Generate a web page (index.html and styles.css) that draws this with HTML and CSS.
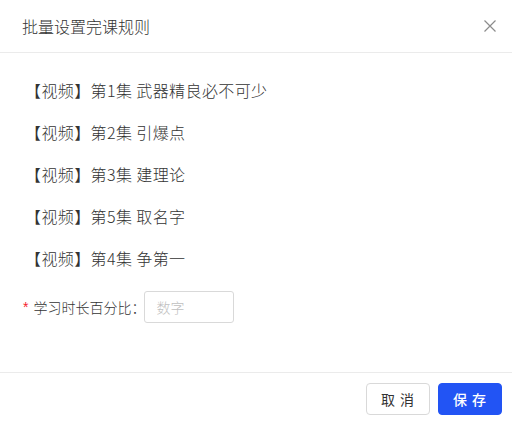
FILE: index.html
```html
<!DOCTYPE html>
<html lang="zh-CN">
<head>
<meta charset="utf-8">
<title>批量设置完课规则</title>
<link rel="stylesheet" href="styles.css">
</head>
<body>
<div class="dialog">
  <div class="header">
    <span class="title">批量设置完课规则</span>
    <span class="close" aria-label="关闭">
      <svg width="12" height="12" viewBox="0 0 12 12"><path d="M0.5 0.5 L11.5 11.5 M11.5 0.5 L0.5 11.5" stroke="#8c8c8c" stroke-width="1.2" fill="none"/></svg>
    </span>
  </div>
  <div class="content">
    <ul class="list">
      <li>【视频】第1集 武器精良必不可少</li>
      <li>【视频】第2集 引爆点</li>
      <li>【视频】第3集 建理论</li>
      <li>【视频】第5集 取名字</li>
      <li>【视频】第4集 争第一</li>
    </ul>
    <div class="form-row">
      <label class="label"><span class="req">*</span>学习时长百分比：</label>
      <input class="input" type="text" placeholder="数字">
    </div>
  </div>
  <div class="footer">
    <button class="btn">取 消</button>
    <button class="btn primary">保 存</button>
  </div>
</div>
</body>
</html>
```
FILE: styles.css
```css
* { box-sizing: border-box; }
html, body { margin: 0; padding: 0; background: #fff; }
body {
  font-family: "Noto Sans CJK SC", "Noto Sans", sans-serif;
  color: #333;
  font-weight: 300;
}
.dialog {
  width: 512px;
  height: 424px;
  display: flex;
  flex-direction: column;
}
.header {
  height: 53px;
  flex: none;
  display: flex;
  align-items: center;
  justify-content: space-between;
  padding: 0 16px 0 22px;
  border-bottom: 1px solid #ebebeb;
}
.title {
  font-size: 16px;
  color: #333;
  line-height: 20px;
}
.close {
  display: flex;
  width: 12px;
  height: 12px;
}
.content {
  flex: 1;
  padding: 16px 22px 0 22px;
}
.list {
  list-style: none;
  margin: 0 0 0 3px;
  padding: 0;
}
.list li {
  font-size: 16px;
  line-height: 42px;
  height: 42px;
  color: #333;
  letter-spacing: 0.4px;
}
.form-row {
  display: flex;
  align-items: center;
  margin-top: 12px;
}
.label {
  flex: none;
  font-size: 14px;
  color: #333;
  display: flex;
  align-items: center;
  white-space: nowrap;
  margin-right: -1px;
}
.req {
  color: #f5222d;
  margin-right: 5px;
  font-size: 14px;
  font-family: "Liberation Sans", sans-serif;
  padding-left: 1px;
}
.input {
  flex: none;
  width: 90px;
  height: 32px;
  border: 1px solid #d9d9d9;
  border-radius: 3px;
  padding: 0 11px;
  font-size: 14px;
  font-family: inherit;
  font-weight: 300;
  color: #333;
  outline: none;
}
.input::placeholder { color: #bfbfbf; }
.footer {
  flex: none;
  height: 52px;
  border-top: 1px solid #ebebeb;
  display: flex;
  justify-content: flex-end;
  align-items: flex-start;
  gap: 8px;
  padding: 10px 10px 0 0;
}
.btn {
  width: 64px;
  height: 32px;
  border: 1px solid #d9d9d9;
  border-radius: 4px;
  background: #fff;
  color: #333;
  font-size: 14px;
  font-family: inherit;
  font-weight: 400;
  padding: 0;
  letter-spacing: 1px;
  cursor: pointer;
}
.btn.primary {
  background: #2254f4;
  border-color: #2254f4;
  color: #fff;
  font-weight: 500;
}
```
